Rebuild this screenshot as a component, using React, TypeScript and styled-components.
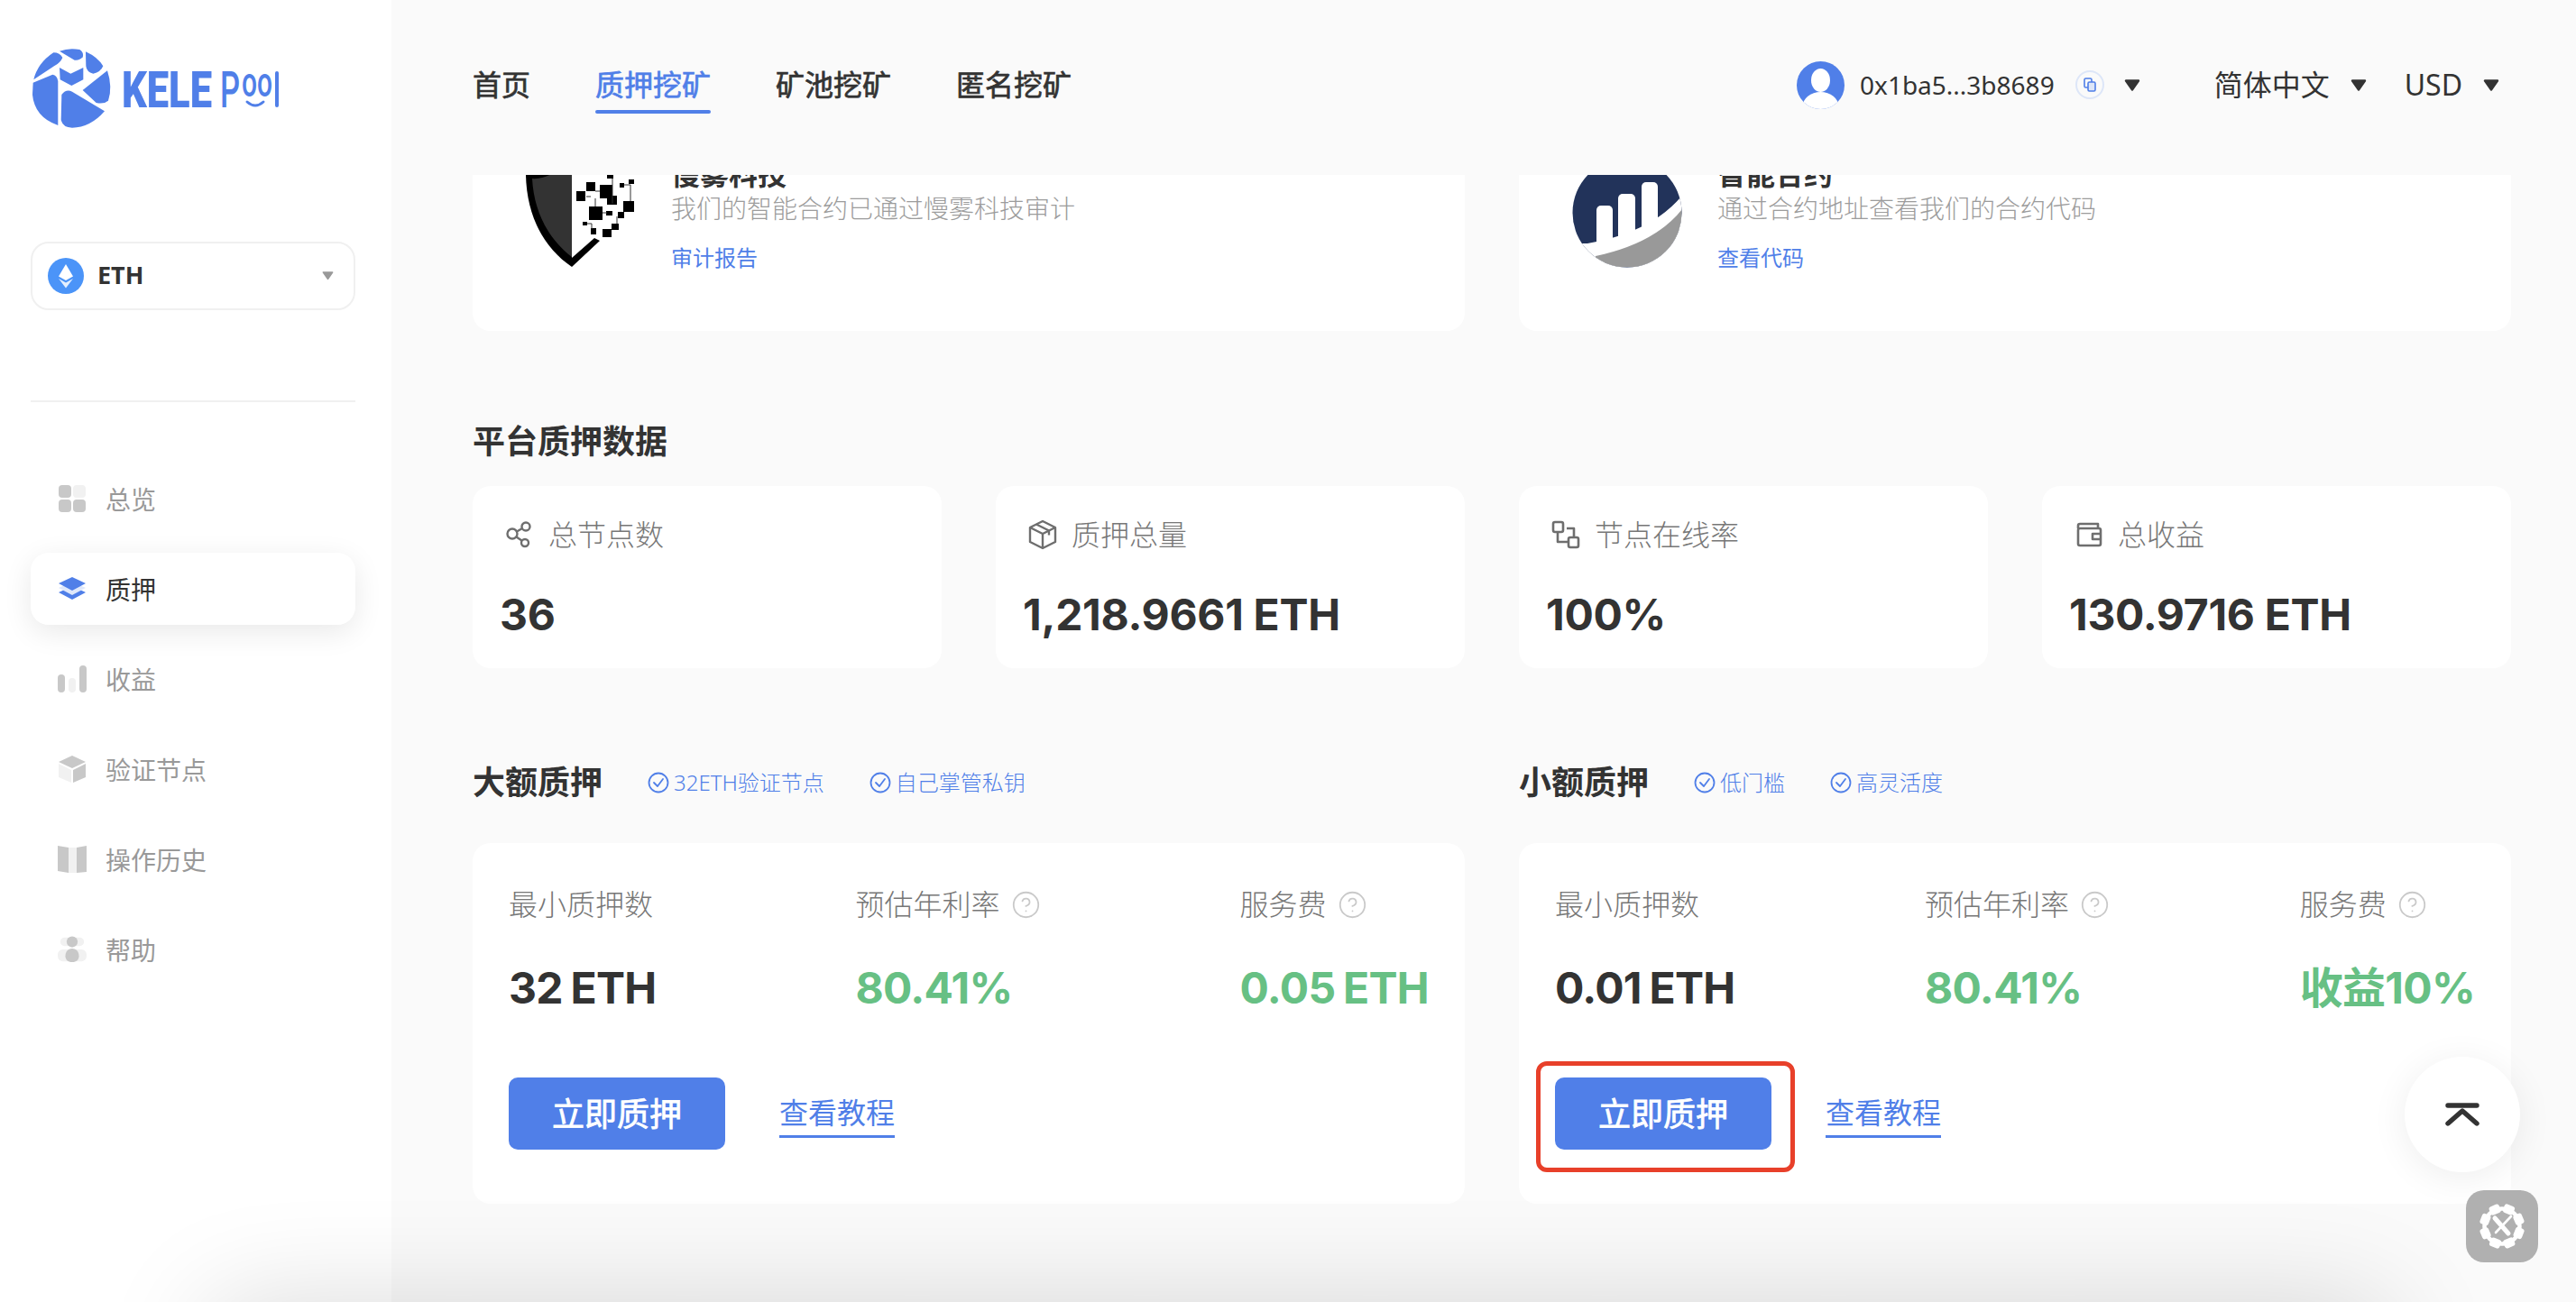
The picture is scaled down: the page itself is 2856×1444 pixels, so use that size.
import * as React from 'react';
import styled, { createGlobalStyle } from 'styled-components';
import { CircleHelp } from 'lucide-react';

const BLUE = '#507fe8';
const GREEN = '#67c084';
const DARK = '#333333';

const GlobalStyle = createGlobalStyle`
  html, body, #root {
    margin: 0;
    padding: 0;
    height: 100%;
  }
  body {
    background: #fafafa;
    color: ${DARK};
    font-family: "Noto Sans", "Noto Sans CJK SC", sans-serif;
  }
  * {
    box-sizing: border-box;
  }
`;

const Page = styled.div`
  position: relative;
  display: flex;
  width: 2856px;
  height: 1444px;
  overflow: hidden;
`;

const Sidebar = styled.aside`
  flex: 0 0 434px;
  padding: 53px 40px 0 34px;
  background: #ffffff;
`;

const LogoRow = styled.div`
  display: flex;
  height: 90px;
`;

const CoinSelect = styled.div`
  display: flex;
  align-items: center;
  height: 76px;
  margin-top: 125px;
  padding: 0 22px 0 17px;
  border: 2px solid #f0f0f0;
  border-radius: 20px;
`;

const CoinName = styled.span`
  flex: 1;
  margin: 0 0 3px 15px;
  font-size: 27px;
  font-weight: 700;
  line-height: 40px;
`;

const Divider = styled.div`
  height: 2px;
  margin-top: 100px;
  background: #f0f0f0;
`;

const SideNav = styled.nav`
  display: flex;
  flex-direction: column;
  gap: 20px;
  margin-top: 67px;
`;

const SideItem = styled.div<{ $active?: boolean }>`
  display: flex;
  align-items: center;
  gap: 21px;
  height: 80px;
  padding-left: 30px;
  border-radius: 20px;
  font-size: 28px;
  color: ${({ $active }) => ($active ? DARK : '#999999')};
  background: ${({ $active }) => ($active ? '#ffffff' : 'transparent')};
  box-shadow: ${({ $active }) => ($active ? '0 8px 32px rgba(0, 0, 0, 0.09)' : 'none')};
`;

const Main = styled.main`
  flex: 1;
  display: flex;
  flex-direction: column;
  min-width: 0;
`;

const Header = styled.header`
  flex: 0 0 194px;
  display: flex;
  align-items: center;
  justify-content: space-between;
  padding: 0 85px 6px 90px;
  background: #fafafa;
`;

const TopNav = styled.nav`
  display: flex;
  gap: 72px;
`;

const TopLink = styled.a<{ $active?: boolean }>`
  position: relative;
  font-size: 32px;
  line-height: 44px;
  -webkit-text-stroke: 0.7px ${({ $active }) => ($active ? BLUE : DARK)};
  color: ${({ $active }) => ($active ? BLUE : DARK)};

  &::after {
    content: '';
    display: ${({ $active }) => ($active ? 'block' : 'none')};
    position: absolute;
    left: 0;
    right: 0;
    bottom: -10px;
    height: 4px;
    border-radius: 2px;
    background: ${BLUE};
  }
`;

const HeaderRight = styled.div`
  display: flex;
  align-items: center;
`;

const Address = styled.span`
  margin: 0 23px 0 17px;
  font-size: 28px;
  line-height: 40px;
`;

const CopyBadge = styled.span`
  display: flex;
  align-items: center;
  justify-content: center;
  width: 32px;
  height: 32px;
  margin-right: 22px;
  border: 2px solid #dde6f8;
  border-radius: 50%;
`;

const HeaderSelect = styled.span<{ $gap: number }>`
  margin-left: ${({ $gap }) => $gap}px;
  margin-right: 23px;
  font-size: 32px;
  line-height: 44px;
`;

const Content = styled.div`
  flex: 1;
  overflow: hidden;
  padding-right: 72px;
  padding-left: 90px;
`;

const ScrollInner = styled.div`
  margin-top: -67px;
`;

const TopCards = styled.div`
  display: grid;
  grid-template-columns: 1100px 1100px;
  gap: 60px;
`;

const InfoCard = styled.div`
  display: flex;
  gap: 39px;
  height: 240px;
  padding: 46px 0 0 59px;
  border-radius: 20px;
  background: #ffffff;
`;

const InfoLogo = styled.div`
  flex: 0 0 122px;
  height: 122px;
  margin-top: 2px;
`;

const InfoText = styled.div`
  display: flex;
  flex-direction: column;
`;

const InfoTitle = styled.div`
  font-size: 32px;
  font-weight: 700;
  line-height: 40px;
`;

const InfoDesc = styled.div`
  font-size: 28px;
  line-height: 40px;
  font-weight: 300;
  color: #9c9c9c;
  margin-top: -2px;
`;

const InfoLink = styled.a`
  margin-top: 19px;
  font-size: 24px;
  line-height: 32px;
  color: ${BLUE};
`;

const SectionTitle = styled.h2<{ $top: number }>`
  margin: ${({ $top }) => $top}px 0 24px;
  font-size: 36px;
  font-weight: 600;
  line-height: 50px;
`;

const StatGrid = styled.div`
  display: grid;
  grid-template-columns: repeat(4, 520px);
  gap: 60px;
`;

const StatCard = styled.div`
  height: 202px;
  padding: 34px 0 0 30px;
  border-radius: 20px;
  background: #ffffff;
`;

const StatLabel = styled.div`
  display: flex;
  align-items: center;
  gap: 16px;
  padding-left: 6px;
  font-size: 32px;
  font-weight: 300;
  line-height: 40px;
  color: #777777;
`;

const StatValue = styled.div`
  margin-top: 39px;
  font-family: Inter, "Noto Sans CJK SC", sans-serif;
  font-size: 48px;
  font-weight: 700;
  line-height: 60px;
  letter-spacing: -0.3px;
`;

const StakeGrid = styled.div`
  display: grid;
  grid-template-columns: 1100px 1100px;
  gap: 60px;
  margin-top: 102px;
`;

const StakeHead = styled.div`
  display: flex;
  align-items: center;
  height: 50px;
  margin-bottom: 42px;
`;

const StakeTitle = styled.h3`
  margin: 0;
  font-size: 36px;
  font-weight: 600;
  line-height: 50px;
`;

const Tag = styled.span`
  display: flex;
  align-items: center;
  gap: 5px;
  margin-left: 50px;
  font-size: 24px;
  font-weight: 300;
  line-height: 32px;
  color: ${BLUE};
`;

const StakeCard = styled.div`
  height: 400px;
  padding: 48px 40px 0;
  border-radius: 20px;
  background: #ffffff;
`;

const StakeStats = styled.div`
  display: flex;
  justify-content: space-between;
`;

const StakeLabel = styled.div`
  display: flex;
  align-items: center;
  gap: 12px;
  font-size: 32px;
  font-weight: 300;
  line-height: 40px;
  color: #777777;
`;

const StakeValue = styled.div<{ $green?: boolean }>`
  margin-top: 43px;
  font-family: Inter, "Noto Sans CJK SC", sans-serif;
  font-size: 48px;
  font-weight: 700;
  line-height: 60px;
  letter-spacing: -0.7px;
  word-spacing: -2px;
  color: ${({ $green }) => ($green ? GREEN : DARK)};
`;

const Actions = styled.div`
  display: flex;
  align-items: center;
  gap: 60px;
  margin-top: 69px;
`;

const StakeButton = styled.button`
  position: relative;
  width: 240px;
  height: 80px;
  padding: 0 0 3px;
  border: 0;
  border-radius: 10px;
  background: ${BLUE};
  color: #ffffff;
  font-family: inherit;
  font-size: 36px;
  -webkit-text-stroke: 0.8px #ffffff;
`;

const Highlight = styled.span`
  position: absolute;
  top: -18px;
  right: -26px;
  bottom: -25px;
  left: -21px;
  border: 5px solid #e8402a;
  border-radius: 12px;
`;

const TutorialLink = styled.a`
  margin-top: 4px;
  padding-bottom: 3px;
  border-bottom: 3px solid ${BLUE};
  font-size: 32px;
  line-height: 44px;
  color: ${BLUE};
`;

const ScrollTop = styled.div`
  position: absolute;
  top: 1172px;
  left: 2666px;
  display: flex;
  align-items: center;
  justify-content: center;
  width: 128px;
  height: 128px;
  border-radius: 50%;
  background: #ffffff;
  box-shadow: 0 6px 40px rgba(0, 0, 0, 0.07);
`;

const ToolBadge = styled.div`
  position: absolute;
  top: 1320px;
  left: 2734px;
  display: flex;
  align-items: center;
  justify-content: center;
  width: 80px;
  height: 80px;
  border-radius: 20px;
  background: #b0b0b0;
`;

const BottomShade = styled.div`
  position: absolute;
  top: 1444px;
  left: 230px;
  width: 2420px;
  height: 200px;
  border-radius: 40px;
  box-shadow: 0 0 120px rgba(0, 0, 0, 0.15);
`;

const Caret = ({ color = DARK, w = 18 }: { color?: string; w?: number }) => (
  <svg width={w} height={(w * 13) / 18} viewBox="0 0 18 13" style={{ flex: 'none' }}>
    <path d="M2 1.5h14L9 11.5z" fill={color} stroke={color} strokeWidth="2.4" strokeLinejoin="round" />
  </svg>
);

const BrandLogo = () => (
  <svg width="280" height="90" viewBox="0 0 280 90">
    <g transform="translate(-14 -13) scale(0.3333)" fill={BLUE}>
      <path d="M138 50Q170 38 205 45Q220 55 215 70Q205 82 188 80Z" />
      <path d="M225 52Q265 70 283 100Q275 120 250 125Q228 120 226 100Z" />
      <path d="M52 145Q65 90 118 55Q140 55 148 72Q140 90 120 100Z" />
      <path d="M138 105L175 125L217 105L217 145L178 165L140 145Z" />
      <path d="M297 115Q315 170 300 215Q285 228 260 222L215 180Z" />
      <path d="M50 155L115 128Q130 130 133 150L133 297Q55 270 48 195Z" />
      <path d="M145 195Q160 175 180 185L288 250Q240 305 180 305Q150 305 143 280Z" />
    </g>
    <text
      x="101"
      y="66"
      fontFamily="Roboto, sans-serif"
      fontWeight="900"
      fontSize="56"
      textLength="100"
      lengthAdjust="spacingAndGlyphs"
      fill={BLUE}
    >
      KELE
    </text>
    <text x="210" y="66" fontFamily="Roboto, sans-serif" fontWeight="500" fontSize="56" textLength="22" lengthAdjust="spacingAndGlyphs" fill={BLUE}>
      P
    </text>
    <text
      transform="translate(234 54) scale(1 1.55)"
      fontFamily="Roboto, sans-serif"
      fontWeight="500"
      fontSize="30"
      textLength="34"
      lengthAdjust="spacingAndGlyphs"
      fill={BLUE}
    >
      oo
    </text>
    <path d="M240 60q9 8 18 0" fill="none" stroke={BLUE} strokeWidth="3" strokeLinecap="round" />
    <rect x="271" y="26" width="4" height="40" rx="2" fill={BLUE} />
  </svg>
);

const EthIcon = () => (
  <svg width="40" height="40" viewBox="0 0 40 40" style={{ flex: 'none' }}>
    <circle cx="20" cy="20" r="20" fill="#4b94f8" />
    <path d="M20 7l-8 13.5 8 4.5 8-4.5z" fill="#ffffff" />
    <path d="M12 23l8 10.5 8-10.5-8 4.5z" fill="#ffffff" opacity="0.85" />
  </svg>
);

const D = '#c8c8c8';
const L = '#f1f1f1';

const OverviewIcon = () => (
  <svg width="32" height="32" viewBox="0 0 32 32">
    <rect x="1" y="1" width="14" height="14" rx="4" fill={D} />
    <rect x="17" y="1" width="14" height="14" rx="4" fill={L} />
    <rect x="1" y="17" width="14" height="14" rx="4" fill={D} />
    <rect x="17" y="17" width="14" height="14" rx="4" fill={D} />
  </svg>
);

const StakeIcon = () => (
  <svg width="32" height="32" viewBox="0 0 32 32">
    <path d="M1 20l15-7 15 7-15 8z" fill={BLUE} />
    <path d="M1 15l15-7 15 7-15 8z" fill="#dfe8fb" />
    <path d="M1 10l15-7 15 7-15 8z" fill={BLUE} />
  </svg>
);

const ChartIcon = () => (
  <svg width="32" height="32" viewBox="0 0 32 32">
    <rect x="0" y="11" width="8" height="20" rx="4" fill={D} />
    <rect x="12" y="15" width="8" height="16" rx="4" fill={L} />
    <rect x="24" y="1" width="8" height="30" rx="4" fill={D} />
  </svg>
);

const CubeIcon = () => (
  <svg width="32" height="32" viewBox="0 0 32 32">
    <path d="M1 8l15-7 15 7-15 7z" fill={D} />
    <path d="M1 10l14 7v14l-14-6z" fill={L} />
    <path d="M31 10l-14 7v14l14-6z" fill={D} />
  </svg>
);

const BookIcon = () => (
  <svg width="32" height="32" viewBox="0 0 32 32">
    <path d="M0 1l12 2v28L0 29z" fill={D} />
    <rect x="12" y="3" width="9" height="28" fill={L} />
    <path d="M21 3l11-2v29l-11 1z" fill={D} />
  </svg>
);

const HelpIcon = () => (
  <svg width="32" height="32" viewBox="0 0 34 32">
    <rect x="3" y="2" width="28" height="10" rx="5" fill={L} />
    <rect x="0" y="16" width="34" height="14" rx="6" fill={L} />
    <circle cx="17" cy="7" r="6.5" fill={D} />
    <path d="M9 24c0-6 4-9 8-9s8 3 8 9c0 4-3 7-8 7s-8-3-8-7z" fill={D} />
  </svg>
);

const Avatar = () => (
  <svg width="53" height="53" viewBox="0 0 53 53">
    <defs>
      <clipPath id="avatar-clip">
        <circle cx="26.5" cy="26.5" r="26.5" />
      </clipPath>
    </defs>
    <circle cx="26.5" cy="26.5" r="26.5" fill={BLUE} />
    <g clipPath="url(#avatar-clip)" fill="#ffffff">
      <ellipse cx="26.5" cy="21" rx="10.5" ry="13" />
      <ellipse cx="26.5" cy="50" rx="20" ry="16" />
    </g>
  </svg>
);

const CopyIcon = () => (
  <svg width="16" height="18" viewBox="0 0 16 18" fill="none" stroke={BLUE} strokeWidth="1.6">
    <rect x="2" y="2" width="8" height="10" rx="1.5" />
    <rect x="6" y="6" width="8" height="10" rx="1.5" fill="#dde6f8" />
  </svg>
);

const ShieldLogo = () => (
  <svg width="122" height="122" viewBox="583 175 122 122">
    <path d="M583 170H634V296C603 275 584 240 583 194Z" fill="#000000" />
    <path d="M590 198Q612 200 634 172V285C608 265 592 235 590 198Z" fill="#333333" />
    <path d="M634 296L665 267L659 264L634 286Z" fill="#000000" />
    <g fill="#000000">
      <rect x="650" y="202" width="10" height="10" />
      <rect x="665" y="205" width="14" height="15" />
      <rect x="639" y="212" width="10" height="11" />
      <rect x="673" y="217" width="11" height="10" />
      <rect x="691" y="223" width="12" height="12" />
      <rect x="653" y="229" width="15" height="15" />
      <rect x="672" y="234" width="7" height="5" />
      <rect x="685" y="235" width="7" height="7" />
      <rect x="646" y="246" width="5" height="4" />
      <rect x="678" y="248" width="8" height="7" />
      <rect x="655" y="253" width="6" height="7" />
      <rect x="668" y="254" width="10" height="9" />
      <rect x="673" y="194" width="7" height="4" />
      <rect x="687" y="203" width="5" height="5" />
      <rect x="697" y="199" width="6" height="5" />
    </g>
    <path d="M660 212h5M679 198v28M692 205h7v18M650 218h5M668 236h5M651 248h5v6M684 240v8M660 220v9" fill="none" stroke="#333333" strokeWidth="1" />
  </svg>
);

const ContractLogo = () => (
  <svg width="122" height="122" viewBox="1743 175 122 122">
    <defs>
      <clipPath id="contract-clip">
        <circle cx="1804" cy="236" r="60.5" />
      </clipPath>
    </defs>
    <g clipPath="url(#contract-clip)">
      <rect x="1743" y="175" width="122" height="122" fill="#22335a" />
      <rect x="1770" y="228" width="18" height="60" rx="5" fill="#ffffff" />
      <rect x="1794" y="215" width="19" height="70" rx="5" fill="#ffffff" />
      <rect x="1820" y="202" width="18" height="70" rx="5" fill="#ffffff" />
      <path d="M1743 270L1760 270Q1830 258 1864 218V296H1743Z" fill="#ffffff" />
      <path d="M1769 284Q1835 270 1865 232V296H1769Z" fill="#999999" />
    </g>
  </svg>
);

const NodesIcon = () => (
  <svg width="32" height="32" viewBox="0 0 32 32" fill="none" stroke="#6e6e6e" strokeWidth="2.4">
    <circle cx="8" cy="15" r="5.5" />
    <circle cx="23" cy="7" r="4.5" />
    <circle cx="22" cy="25" r="4" />
    <path d="M13 12.5l6-3.5M12.5 18.5l6 4" />
  </svg>
);

const BoxIcon = () => (
  <svg width="32" height="34" viewBox="0 0 32 34" fill="none" stroke="#6e6e6e" strokeWidth="2.4" strokeLinejoin="round">
    <path d="M16 2l14 7v16l-14 7-14-7V9z" />
    <path d="M2 9l14 7 14-7M16 16v16M9 5.5l14 7v5" />
  </svg>
);

const LinkNodesIcon = () => (
  <svg width="32" height="32" viewBox="0 0 32 32" fill="none" stroke="#6e6e6e" strokeWidth="2.6" strokeLinejoin="round">
    <rect x="2" y="2" width="11" height="11" rx="2" />
    <rect x="19" y="19" width="11" height="11" rx="2" />
    <path d="M7 13v11h12M17 9h8v10" />
  </svg>
);

const WalletIcon = () => (
  <svg width="32" height="30" viewBox="0 0 32 30" fill="none" stroke="#6e6e6e" strokeWidth="2.6" strokeLinejoin="round">
    <path d="M4 8V5a2 2 0 0 1 2-2h20v5" />
    <rect x="4" y="8" width="25" height="19" rx="2" />
    <path d="M29 14h-9v6h9" />
  </svg>
);

const CheckIcon = () => (
  <svg width="24" height="24" viewBox="0 0 24 24" fill="none" stroke={BLUE} strokeWidth="1.8" strokeLinecap="round" strokeLinejoin="round">
    <circle cx="12" cy="12" r="10.5" />
    <path d="M7 12l4 4 6-8" />
  </svg>
);

const UpIcon = () => (
  <svg width="38" height="26" viewBox="0 0 38 26" fill="none" stroke={DARK} strokeWidth="5.4" strokeLinecap="round" strokeLinejoin="round">
    <path d="M3 3h32M3 23L19 9l16 14" />
  </svg>
);

const GearIcon = () => (
  <svg width="52" height="52" viewBox="0 0 52 52">
    <g fill="#ffffff">
      {[0, 45, 90, 135, 180, 225, 270, 315].map((deg) => (
        <rect key={deg} x="20" y="1" width="12" height="10" rx="3" transform={`rotate(${deg + 22} 26 26)`} />
      ))}
    </g>
    <circle cx="26" cy="26" r="19.5" fill="none" stroke="#ffffff" strokeWidth="4.5" />
    <path d="M18 17l15 17" stroke="#ffffff" strokeWidth="5" strokeLinecap="round" />
    <path d="M36 15L19 33" stroke="#ffffff" strokeWidth="2.6" strokeLinecap="round" />
  </svg>
);

type StakeStat = { label: string; value: string; help?: boolean; green?: boolean };

type StakePlan = {
  title: string;
  tags: string[];
  stats: StakeStat[];
  highlight?: boolean;
};

const sideItems = [
  { label: '总览', icon: <OverviewIcon /> },
  { label: '质押', icon: <StakeIcon />, active: true },
  { label: '收益', icon: <ChartIcon /> },
  { label: '验证节点', icon: <CubeIcon /> },
  { label: '操作历史', icon: <BookIcon /> },
  { label: '帮助', icon: <HelpIcon /> },
];

const platformStats = [
  { label: '总节点数', value: '36', icon: <NodesIcon /> },
  { label: '质押总量', value: '1,218.9661 ETH', icon: <BoxIcon /> },
  { label: '节点在线率', value: '100%', icon: <LinkNodesIcon /> },
  { label: '总收益', value: '130.9716 ETH', icon: <WalletIcon /> },
];

const plans: StakePlan[] = [
  {
    title: '大额质押',
    tags: ['32ETH验证节点', '自己掌管私钥'],
    stats: [
      { label: '最小质押数', value: '32 ETH' },
      { label: '预估年利率', value: '80.41%', help: true, green: true },
      { label: '服务费', value: '0.05 ETH', help: true, green: true },
    ],
  },
  {
    title: '小额质押',
    tags: ['低门槛', '高灵活度'],
    highlight: true,
    stats: [
      { label: '最小质押数', value: '0.01 ETH' },
      { label: '预估年利率', value: '80.41%', help: true, green: true },
      { label: '服务费', value: '收益10%', help: true, green: true },
    ],
  },
];

const App = () => (
  <Page>
    <GlobalStyle />
    <Sidebar>
      <LogoRow>
        <BrandLogo />
      </LogoRow>
      <CoinSelect>
        <EthIcon />
        <CoinName>ETH</CoinName>
        <Caret color="#999999" w={13} />
      </CoinSelect>
      <Divider />
      <SideNav>
        {sideItems.map((item) => (
          <SideItem key={item.label} $active={item.active}>
            {item.icon}
            {item.label}
          </SideItem>
        ))}
      </SideNav>
    </Sidebar>
    <Main>
      <Header>
        <TopNav>
          <TopLink>首页</TopLink>
          <TopLink $active>质押挖矿</TopLink>
          <TopLink>矿池挖矿</TopLink>
          <TopLink>匿名挖矿</TopLink>
        </TopNav>
        <HeaderRight>
          <Avatar />
          <Address>0x1ba5...3b8689</Address>
          <CopyBadge>
            <CopyIcon />
          </CopyBadge>
          <Caret />
          <HeaderSelect $gap={82}>简体中文</HeaderSelect>
          <Caret />
          <HeaderSelect $gap={42}>USD</HeaderSelect>
          <Caret />
        </HeaderRight>
      </Header>
      <Content>
        <ScrollInner>
          <TopCards>
            <InfoCard>
              <InfoLogo>
                <ShieldLogo />
              </InfoLogo>
              <InfoText>
                <InfoTitle>慢雾科技</InfoTitle>
                <InfoDesc>我们的智能合约已通过慢雾科技审计</InfoDesc>
                <InfoLink>审计报告</InfoLink>
              </InfoText>
            </InfoCard>
            <InfoCard>
              <InfoLogo>
                <ContractLogo />
              </InfoLogo>
              <InfoText>
                <InfoTitle>智能合约</InfoTitle>
                <InfoDesc>通过合约地址查看我们的合约代码</InfoDesc>
                <InfoLink>查看代码</InfoLink>
              </InfoText>
            </InfoCard>
          </TopCards>
          <SectionTitle $top={98}>平台质押数据</SectionTitle>
          <StatGrid>
            {platformStats.map((stat) => (
              <StatCard key={stat.label}>
                <StatLabel>
                  {stat.icon}
                  {stat.label}
                </StatLabel>
                <StatValue>{stat.value}</StatValue>
              </StatCard>
            ))}
          </StatGrid>
          <StakeGrid>
            {plans.map((plan) => (
              <div key={plan.title}>
                <StakeHead>
                  <StakeTitle>{plan.title}</StakeTitle>
                  {plan.tags.map((tag) => (
                    <Tag key={tag}>
                      <CheckIcon />
                      {tag}
                    </Tag>
                  ))}
                </StakeHead>
                <StakeCard>
                  <StakeStats>
                    {plan.stats.map((stat) => (
                      <div key={stat.label}>
                        <StakeLabel>
                          {stat.label}
                          {stat.help && <CircleHelp size={33} color="#c9c9c9" strokeWidth={1.3} />}
                        </StakeLabel>
                        <StakeValue $green={stat.green}>{stat.value}</StakeValue>
                      </div>
                    ))}
                  </StakeStats>
                  <Actions>
                    <StakeButton>
                      立即质押
                      {plan.highlight && <Highlight />}
                    </StakeButton>
                    <TutorialLink>查看教程</TutorialLink>
                  </Actions>
                </StakeCard>
              </div>
            ))}
          </StakeGrid>
        </ScrollInner>
      </Content>
    </Main>
    <BottomShade />
    <ScrollTop>
      <UpIcon />
    </ScrollTop>
    <ToolBadge>
      <GearIcon />
    </ToolBadge>
  </Page>
);

export default App;
